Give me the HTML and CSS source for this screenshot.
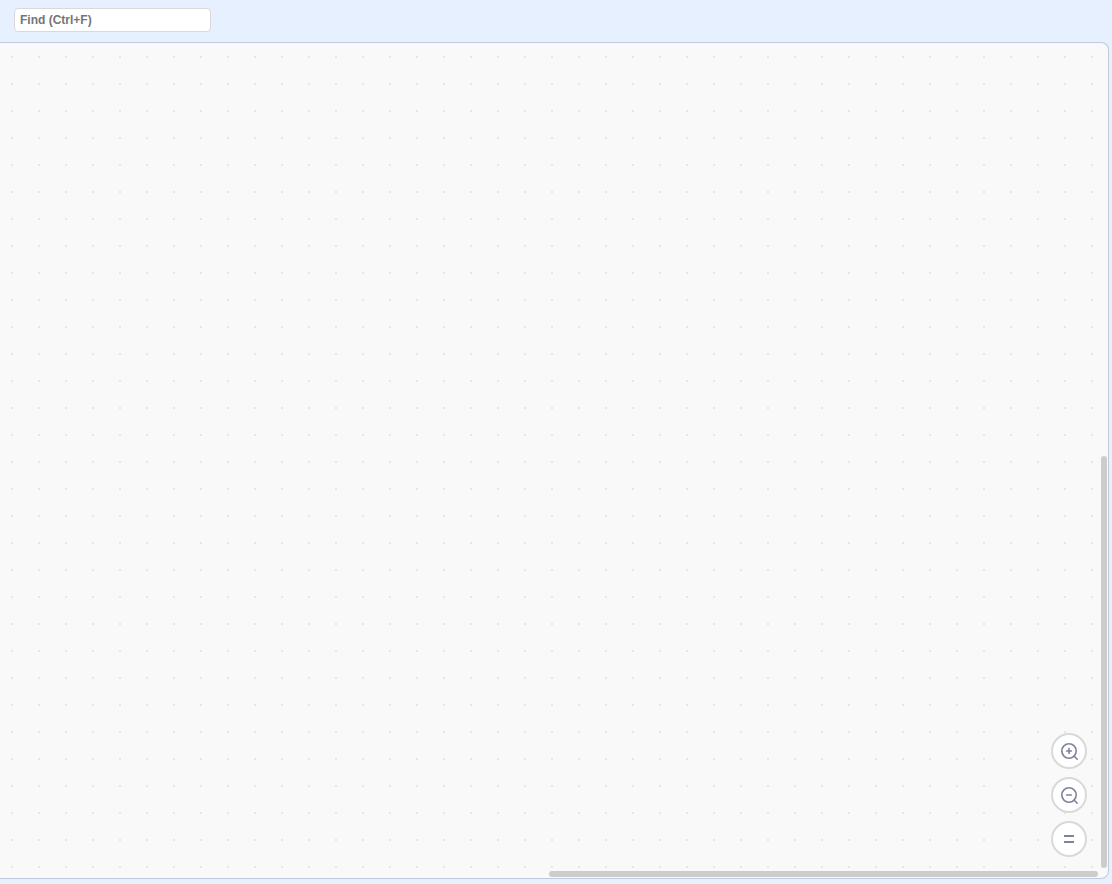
FILE: index.html
```html
<!DOCTYPE html>
<html lang="en">
<head>
  <meta charset="UTF-8">
  <meta name="viewport" content="width=device-width, initial-scale=1.0">
  <title>Block Editor</title>
  <link rel="stylesheet" href="styles.css">
</head>
<body>
  <header class="find-bar">
    <input type="text" class="find-input" placeholder="Find (Ctrl+F)" aria-label="Find">
  </header>

  <main class="workspace">
    <div class="zoom-controls">
      <button type="button" aria-label="Zoom in">
        <svg viewBox="0 0 36 36">
          <circle cx="18" cy="18" r="7.2"/>
          <path d="M23 23l3.2 3.2M18 15.6v4.8M15.6 18h4.8"/>
        </svg>
      </button>
      <button type="button" aria-label="Zoom out">
        <svg viewBox="0 0 36 36">
          <circle cx="18" cy="18" r="7.2"/>
          <path d="M23 23l3.2 3.2M15.6 18h4.8"/>
        </svg>
      </button>
      <button type="button" aria-label="Reset zoom">
        <svg viewBox="0 0 36 36">
          <path class="thick" d="M13 15h10M13 21h10"/>
        </svg>
      </button>
    </div>

    <div class="scrollbar vertical"><div class="handle"></div></div>
    <div class="scrollbar horizontal"><div class="handle"></div></div>
  </main>
</body>
</html>
```
FILE: styles.css
```css
* {
  box-sizing: border-box;
}

body {
  display: flex;
  flex-direction: column;
  height: 100vh;
  margin: 0;
  padding: 0 3px 5px 0;
  font-family: "Liberation Sans", Arial, sans-serif;
  background-color: #e6f0ff;
}

.find-bar {
  padding: 8px 14px 10px;
}

.find-input {
  display: block;
  width: 197px;
  height: 24px;
  padding: 0 5px;
  font-family: inherit;
  font-size: 12px;
  font-weight: bold;
  color: #575e75;
  background-color: #fff;
  border: 1px solid #d9d9d9;
  border-radius: 4px;
}

.find-input::placeholder {
  color: #757575;
}

.workspace {
  position: relative;
  flex: 1;
  overflow: hidden;
  border: 1px solid #bfcadc;
  border-left: none;
  border-radius: 0 8px 8px 0;
  background-color: #f9f9f9;
  /* 2px dot every 27px */
  background-image: conic-gradient(at 2px 2px, transparent 75%, #e6e6e6 0);
  background-size: 27px 27px;
  background-position: 11px 13px;
}

.zoom-controls {
  position: absolute;
  right: 21px;
  bottom: 21px;
  display: flex;
  flex-direction: column;
  gap: 8px;
}

.zoom-controls button {
  width: 36px;
  height: 36px;
  padding: 0;
  border: 2px solid #d9d9d9;
  border-radius: 50%;
  background-color: #fff;
  cursor: pointer;
}

.zoom-controls svg {
  display: block;
  width: 36px;
  height: 36px;
  margin: -2px;
  fill: none;
  stroke: #7f8399;
  stroke-width: 1.6;
  stroke-linecap: round;
}

.zoom-controls .thick {
  stroke-width: 2;
  stroke-linecap: butt;
}

.scrollbar {
  position: absolute;
  display: flex;
  justify-content: flex-end;
}

.vertical {
  top: 0;
  right: 1px;
  bottom: 10px;
  width: 6px;
  flex-direction: column;
}

.horizontal {
  left: 0;
  right: 10px;
  bottom: 1px;
  height: 6px;
}

.handle {
  border-radius: 3px;
  background-color: #ccc;
}

.vertical .handle {
  height: 50%;
}

.horizontal .handle {
  width: 50%;
}
```
